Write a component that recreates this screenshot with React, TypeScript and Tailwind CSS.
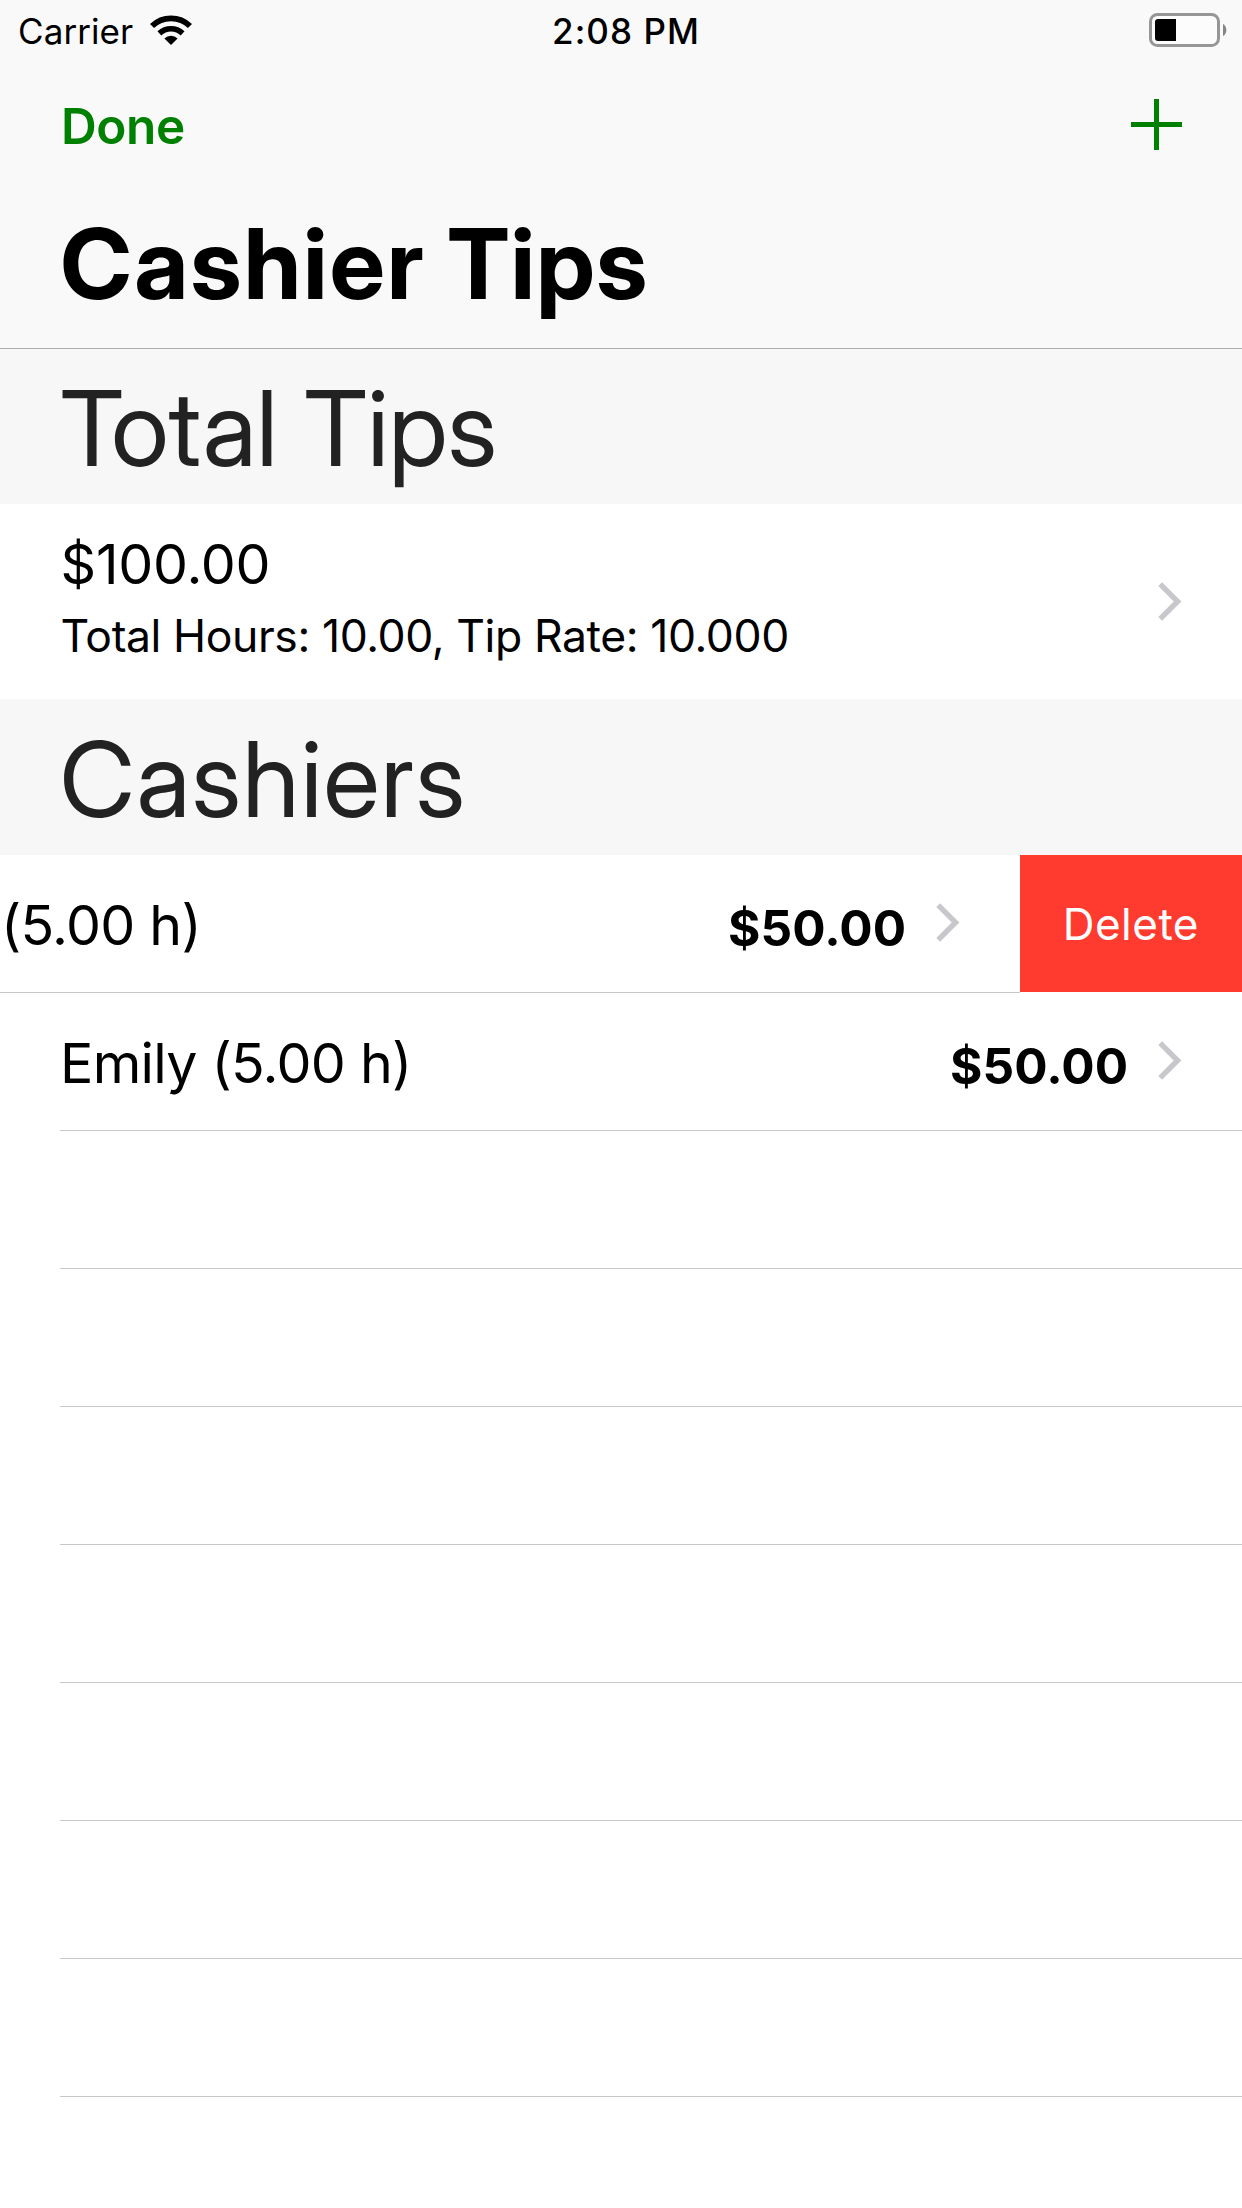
const cashiers = [{ label: "Emily (5.00 h)", amount: "$50.00" }];
const emptyRows = [0, 1, 2, 3, 4, 5, 6];

function Chevron() {
  return (
    <svg className="h-[39px] w-[24px] shrink-0" viewBox="0 0 24 39" fill="none">
      <path d="M2.2 2.1L19.6 19.5L2.2 36.9" stroke="#c7c7cc" strokeWidth="5.4" />
    </svg>
  );
}

function WifiIcon() {
  return (
    <svg className="ml-[17px] mt-[15px] h-[30px] w-[42px]" viewBox="0 0 42 30" fill="none">
      <path d="M2 11A27.3 27.3 0 0 1 40 11" stroke="#000" strokeWidth="5.8" />
      <path d="M9.4 18.4A16.8 16.8 0 0 1 32.6 18.4" stroke="#000" strokeWidth="5.6" />
      <path d="M14.4 23.4A9.4 9.4 0 0 1 27.6 23.4L21 30Z" fill="#000" />
    </svg>
  );
}

function BatteryIcon() {
  return (
    <svg className="h-[34px] w-[79px]" viewBox="0 0 79 34">
      <rect x="1.5" y="1.5" width="68" height="31" rx="7" fill="#fcfcfc" stroke="#969696" strokeWidth="3" />
      <path d="M9 6H27V28H9A3 3 0 0 1 6 25V9A3 3 0 0 1 9 6Z" fill="#000" />
      <path d="M74 11A7 7 0 0 1 74 23Z" fill="#858585" />
    </svg>
  );
}

function SectionHeader({ children, className }: { children: string; className: string }) {
  return (
    <h2
      className={`${className} bg-[#f7f7f7] font-['Inter_Display','Inter',sans-serif] text-[104.5px] leading-none text-[#222222]`}
    >
      {children}
    </h2>
  );
}

export default function App() {
  return (
    <div className="h-[2208px] w-[1242px] overflow-hidden bg-white font-['Inter','Liberation_Sans',sans-serif] whitespace-nowrap text-black">
      <header className="h-[349px] border-b border-[#adadad] bg-[#f9f9f9]">
        <div className="grid h-[60px] grid-cols-[552px_1fr_93px] items-start">
          <div className="flex items-start">
            <span className="pt-[13.8px] pl-[18px] text-[35px] leading-none tracking-[0.08px]">Carrier</span>
            <WifiIcon />
          </div>
          <span className="pt-[13.8px] text-[35px] leading-none font-medium tracking-[1.07px]">2:08 PM</span>
          <div className="pt-[13px]">
            <BatteryIcon />
          </div>
        </div>
        <div className="flex h-[132px] items-start justify-between pr-[60px] pl-[61px]">
          <button className="pt-[41.8px] text-[49.5px] leading-none font-semibold tracking-[-0.39px] text-[#008000]">
            Done
          </button>
          <button className="pt-[39px]" aria-label="Add">
            <svg className="h-[51px] w-[51px]" viewBox="0 0 51 51">
              <path d="M0 23H23V0H28V23H51V28H28V51H23V28H0Z" fill="#008000" />
            </svg>
          </button>
        </div>
        <h1 className="pt-[23px] pl-[60.5px] font-['Inter_Display','Inter',sans-serif] text-[98px] leading-none font-bold tracking-[2.3px] [word-spacing:-2px]">
          Cashier <span className="tracking-[1.37px]">Tips</span>
        </h1>
      </header>

      <SectionHeader className="h-[155px] pt-[26.7px] pl-[60px] tracking-[-0.17px]">Total Tips</SectionHeader>

      <div className="flex h-[195px] justify-between pr-[60px] pl-[60.5px]">
        <div className="pt-[32px]">
          <p className="text-[55.5px] leading-none tracking-[-0.23px]">$100.00</p>
          <p className="mt-[22.4px] text-[44.5px] leading-none tracking-[-0.4px]">Total Hours: 10.00, Tip Rate: 10.000</p>
        </div>
        <div className="pt-[78px]">
          <Chevron />
        </div>
      </div>

      <SectionHeader className="h-[156px] pt-[27.7px] pl-[59.5px] tracking-[1.21px]">Cashiers</SectionHeader>

      <div className="flex h-[138px]">
        <div className="flex flex-1 items-start border-b border-[#c8c7cc] pr-[60px] pl-[1px]">
          <span className="flex-1 pt-[42.3px] text-[55.5px] leading-none tracking-[-0.73px]">(5.00 h)</span>
          <span className="w-[208px] pt-[48.8px] text-[49.5px] leading-none font-bold tracking-[0.05px]">$50.00</span>
          <span className="pt-[48px]">
            <Chevron />
          </span>
        </div>
        <button className="flex h-[137px] w-[222px] items-start bg-[#ff3b30] pt-[46.8px] pl-[42.7px] text-[44px] leading-none tracking-[0.5px] text-white">
          Delete
        </button>
      </div>

      {cashiers.map((c) => (
        <div key={c.label} className="ml-[60px] flex h-[138px] items-start border-b border-[#c8c7cc] pr-[60px]">
          <span className="flex-1 pt-[42.3px] text-[55.5px] leading-none tracking-[-0.73px]">{c.label}</span>
          <span className="w-[208px] pt-[48.8px] text-[49.5px] leading-none font-bold tracking-[0.05px]">{c.amount}</span>
          <span className="pt-[48px]">
            <Chevron />
          </span>
        </div>
      ))}

      {emptyRows.map((i) => (
        <div key={i} className="ml-[60px] h-[138px] border-b border-[#c8c7cc]" />
      ))}
    </div>
  );
}
